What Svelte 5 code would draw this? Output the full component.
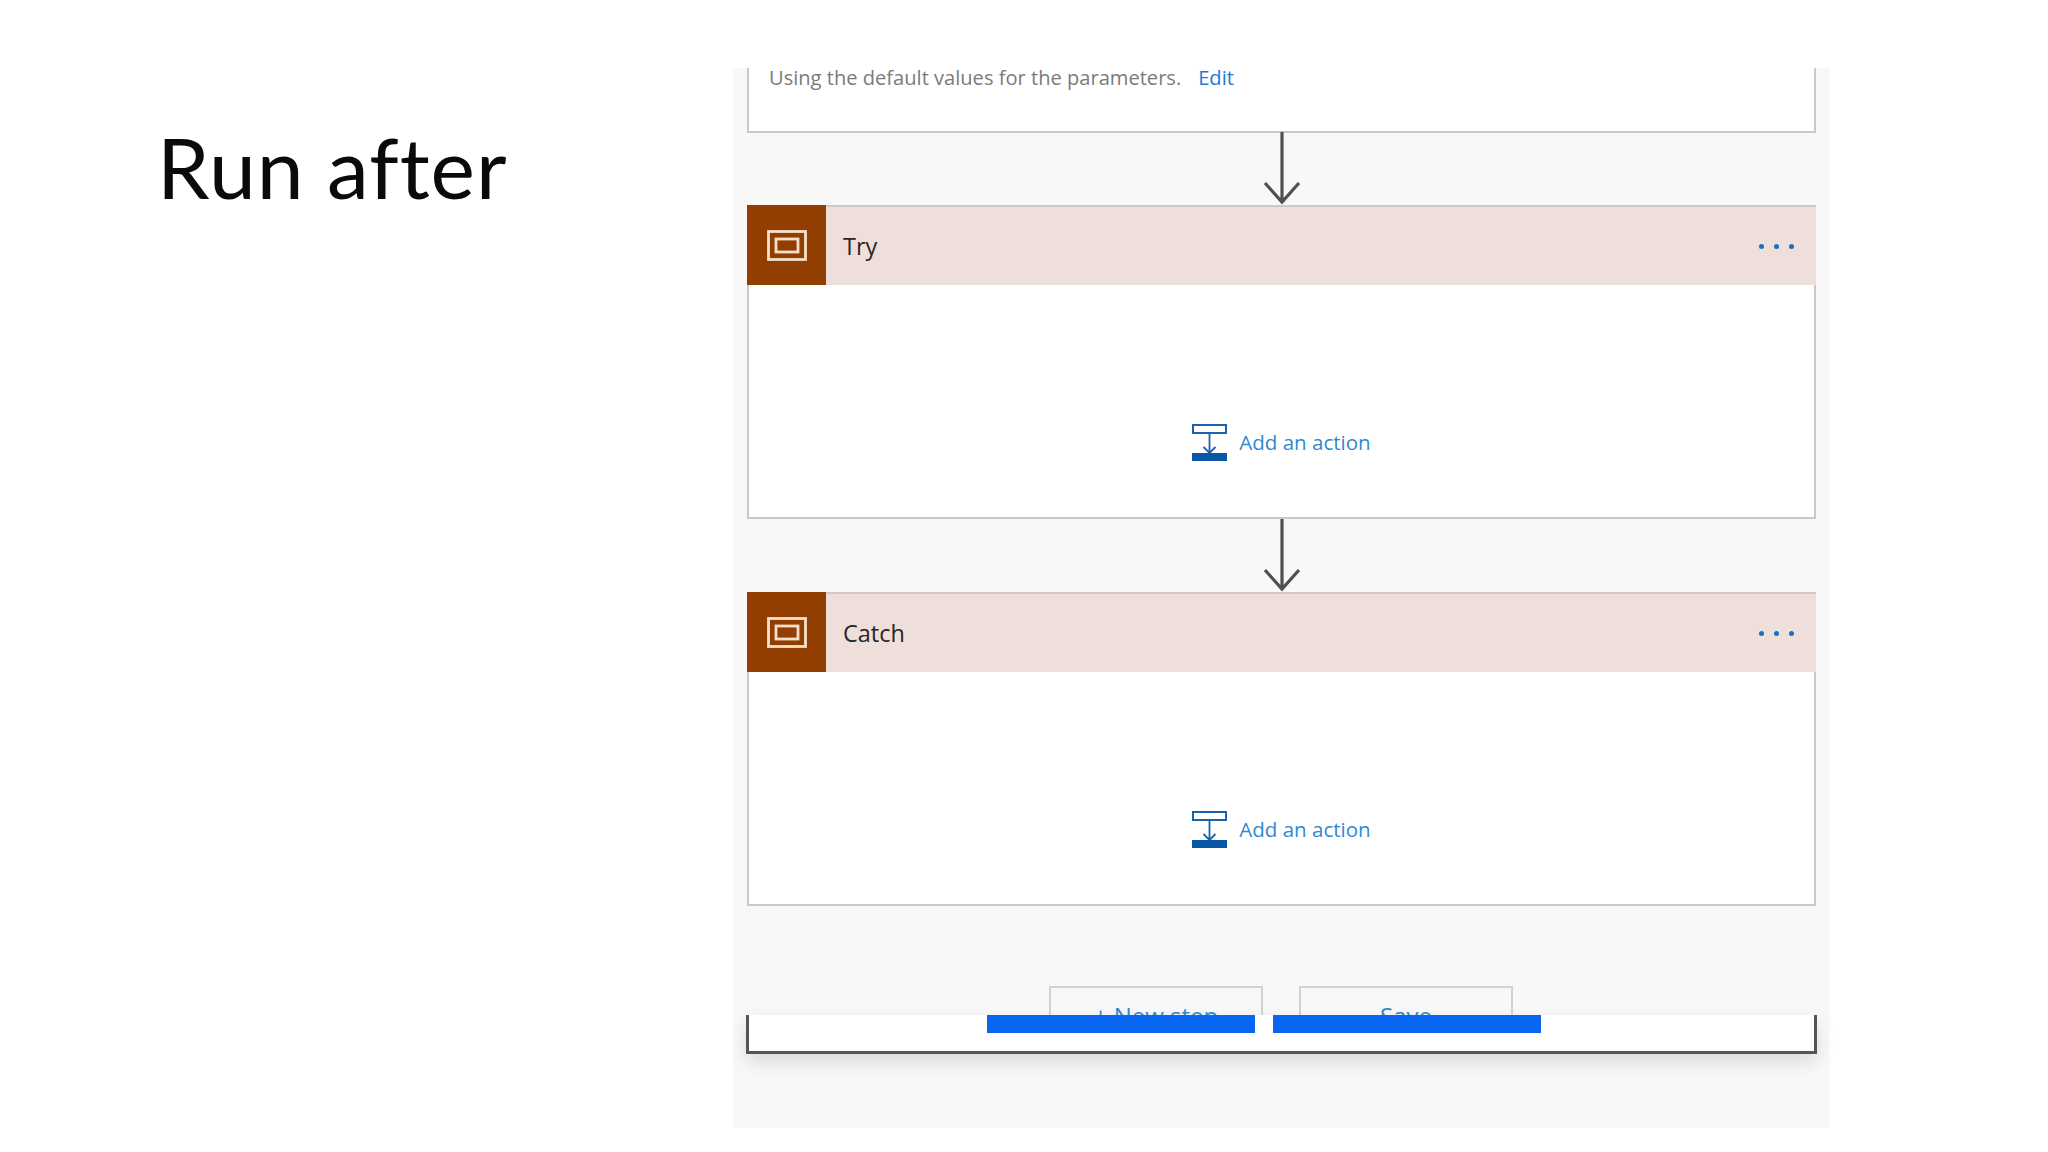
<script lang="ts">
  // Try and Catch scopes share the same card
  const scopes = ['Try', 'Catch'];
</script>

<div class="slide">
  <div class="heading">
    <h1>Run after</h1>
  </div>

  <div class="canvas">
    <div class="card params">
      <span class="params-text">Using the default values for the parameters.</span>
      <span class="edit">Edit</span>
    </div>

    {#each scopes as scope}
      <svg class="arrow" width="38" height="73" viewBox="0 0 38 73">
        <path d="M19 0V70M2 51l17 19 17-19" fill="none" stroke="#505050" stroke-width="3.2" />
      </svg>
      <div class="card scope">
        <div class="scope-header">
          <div class="scope-icon">
            <svg width="40" height="31" viewBox="0 0 40 31">
              <rect x="1.5" y="1.5" width="37" height="28" fill="none" stroke="#f6e0cc" stroke-width="2.8" />
              <rect x="9" y="9" width="22" height="13" fill="none" stroke="#f6e0cc" stroke-width="2.8" />
            </svg>
          </div>
          <span class="scope-title">{scope}</span>
          <div class="dots"><i></i><i></i><i></i></div>
        </div>
        <div class="scope-body">
          <svg width="35" height="37" viewBox="0 0 35 37">
            <rect x="1" y="1" width="33" height="8" fill="#fff" stroke="#1a62ae" stroke-width="2" />
            <path d="M17.5 9V28M11.5 23l6 6 6-6" fill="none" stroke="#1a62ae" stroke-width="1.8" />
            <rect x="0" y="29" width="35" height="8" fill="#0a57a8" />
          </svg>
          <span class="add">Add an action</span>
        </div>
      </div>
    {/each}

    <div class="buttons">
      <div class="ghost-btn"><span>+ New step</span></div>
      <div class="ghost-btn"><span>Save</span></div>
    </div>

    <div class="frame">
      <div class="bar first"></div>
      <div class="bar"></div>
    </div>
  </div>
</div>

<style>
  :global(body) {
    background: #fff;
  }

  .slide {
    display: flex;
    width: 2048px;
    height: 1152px;
    overflow: hidden;
    background: #fff;
  }

  .heading {
    width: 733px;
    flex: none;
    padding: 114px 0 0 157px;
    box-sizing: border-box;
  }

  h1 {
    margin: 0;
    font-family: "Lato", "Liberation Sans", sans-serif;
    font-weight: 400;
    font-size: 84px;
    letter-spacing: 1px;
    line-height: 106px;
    color: #0a0a0a;
  }

  .canvas {
    width: 1097px;
    height: 1060px;
    margin-top: 68px;
    padding: 0 14px;
    box-sizing: border-box;
    background: #f8f8f9;
    display: flex;
    flex-direction: column;
    align-items: stretch;
    font-family: "Open Sans", "Liberation Sans", sans-serif;
  }

  .card {
    background: #fff;
    border: 2px solid #c9c9c9;
    box-sizing: border-box;
  }

  .params {
    height: 65px;
    margin-bottom: -1px;
    border-top: none;
    padding: 0 0 0 20px;
    display: flex;
    gap: 17px;
    font-size: 20.1px;
    line-height: 20px;
  }

  .params-text {
    color: #7b7b7b;
  }

  .edit {
    color: #1f77dd;
  }

  .arrow {
    align-self: center;
    flex: none;
    display: block;
  }

  .scope {
    height: 314px;
    border-top: none;
    display: flex;
    flex-direction: column;
  }

  .scope-header {
    height: 80px;
    flex: none;
    margin: 0 -2px;
    background: #eedfdb;
    border-top: 2px solid #cfc8c4;
    box-sizing: border-box;
    display: flex;
    align-items: center;
  }

  .scope-icon {
    width: 79px;
    height: 80px;
    margin-top: -2px;
    flex: none;
    background: #923e00;
    display: flex;
    align-items: center;
    justify-content: center;
  }

  .scope-title {
    margin-left: 17px;
    font-size: 23.5px;
    color: #2b2523;
  }

  .dots {
    margin-left: auto;
    margin-right: 22px;
    display: flex;
    gap: 10px;
  }

  .dots i {
    width: 5px;
    height: 5px;
    border-radius: 50%;
    background: #1a6fc0;
  }

  .scope-body {
    flex: 1;
    display: flex;
    align-items: flex-end;
    justify-content: center;
    gap: 12px;
    padding-bottom: 56px;
  }

  .add {
    font-size: 20.5px;
    line-height: 37px;
    color: #2f8ad3;
  }

  .buttons {
    display: flex;
    justify-content: flex-start;
    gap: 36px;
    margin: 80px 0 0 302px;
    height: 29px;
    overflow: hidden;
    flex: none;
  }

  .ghost-btn {
    width: 214px;
    height: 60px;
    box-sizing: border-box;
    border: 2px solid #d2d2d2;
    padding-top: 13px;
    text-align: center;
    font-size: 24px;
    line-height: 30px;
    color: #2f8ad3;
  }

  .frame {
    height: 39px;
    margin: 0 -1px;
    flex: none;
    box-sizing: border-box;
    background: #fff;
    border: 3px solid #555;
    border-top: none;
    box-shadow: 0 8px 18px rgba(0, 0, 0, 0.12);
    display: flex;
    gap: 18px;
    padding-left: 238px;
    align-items: flex-start;
  }

  .bar {
    width: 268px;
    height: 18px;
    background: #0866f2;
  }
</style>
